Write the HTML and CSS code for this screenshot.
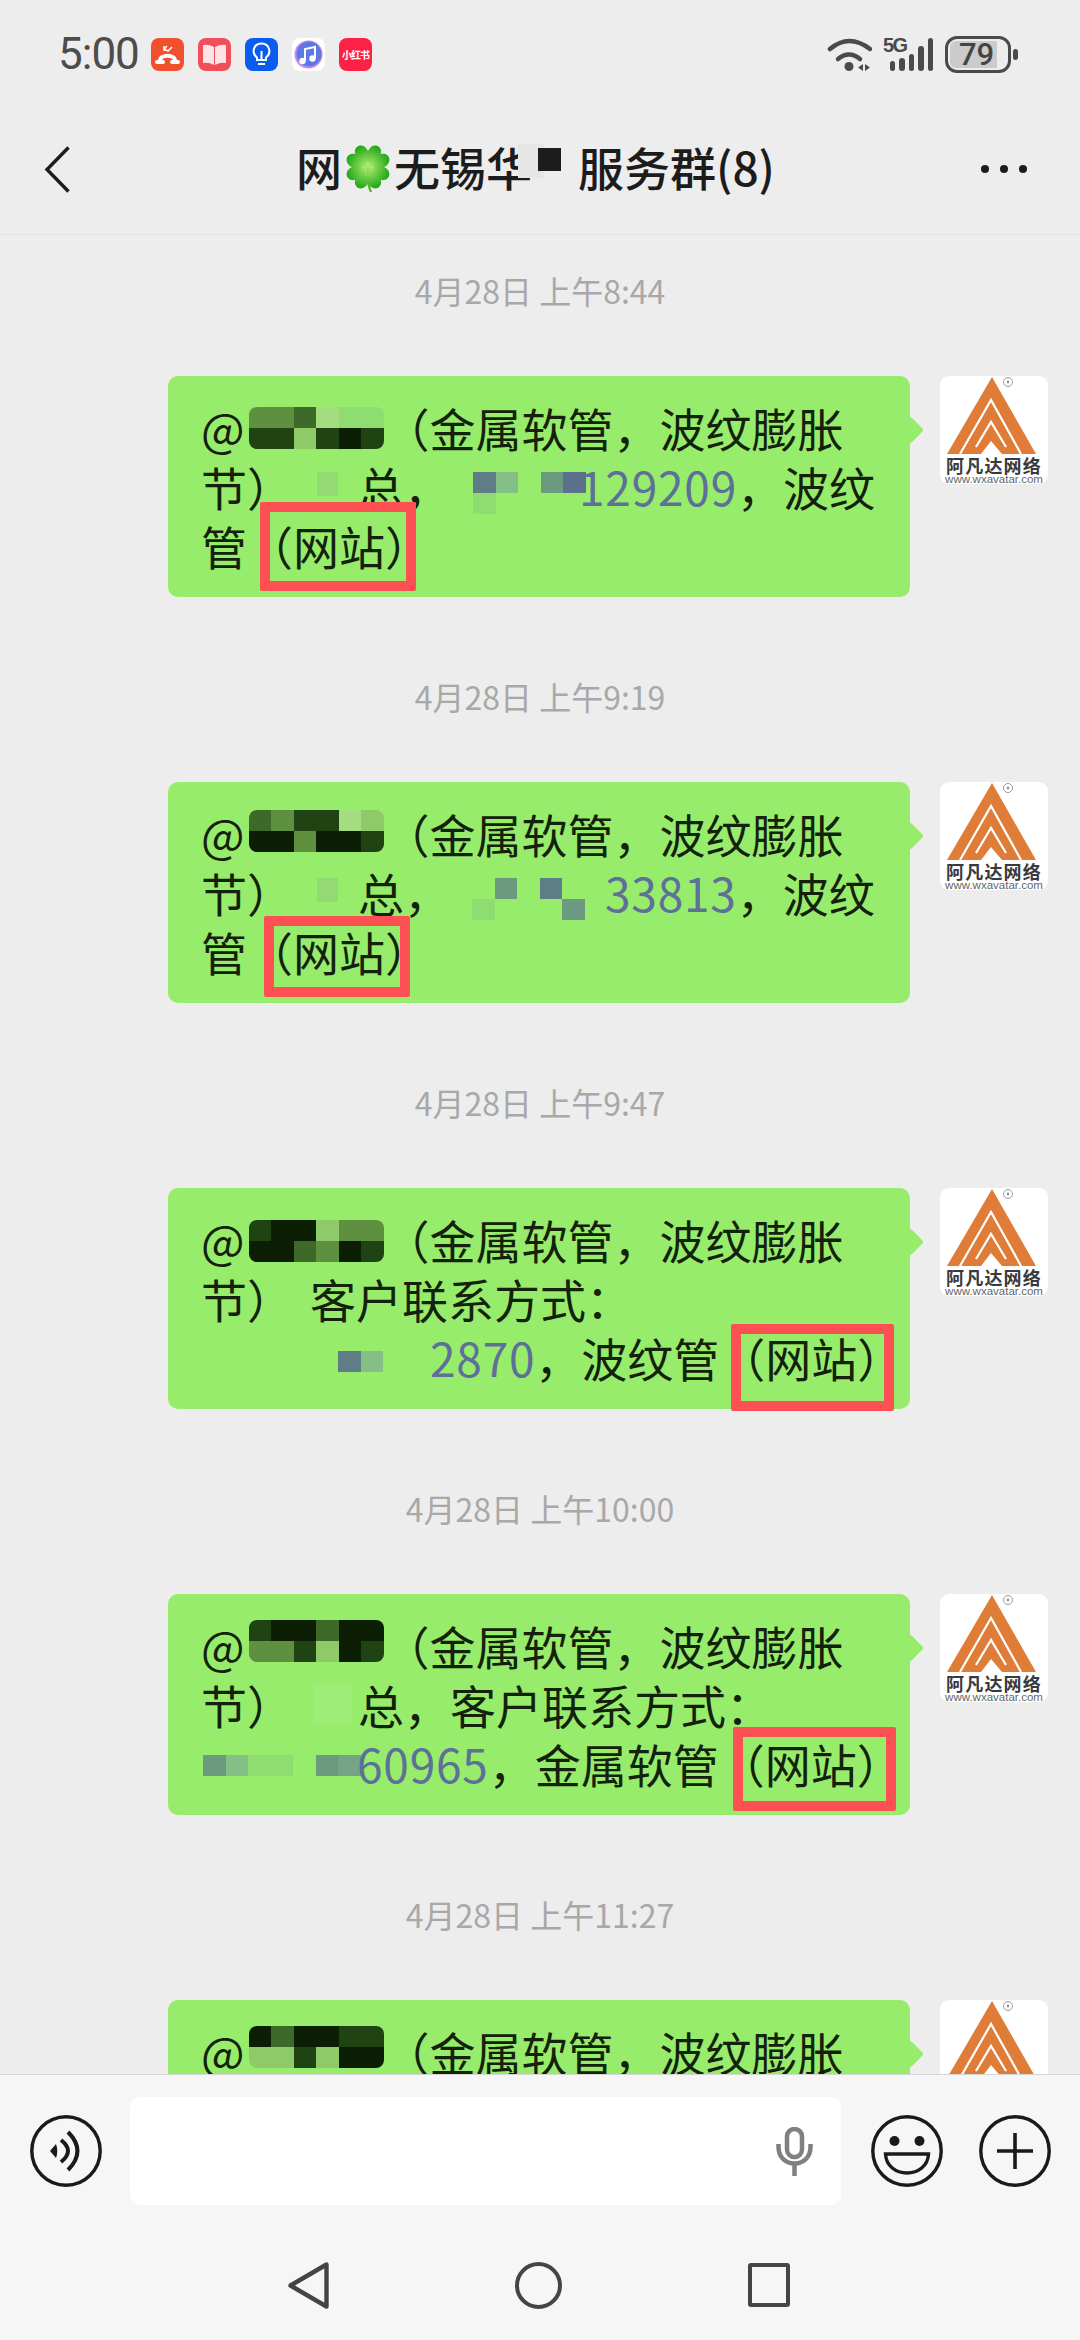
FILE: index.html
```html
<!DOCTYPE html>
<html lang="zh-CN">
<head>
    <meta charset="UTF-8">
    <meta name="viewport" content="width=device-width, initial-scale=1.0">
    <title>网无锡服务群(8)</title>
    <link rel="stylesheet" href="styles.css">
</head>
<body>
    <svg class="defs" width="0" height="0">
        <defs>
            <symbol id="logo" viewBox="0 0 108 80">
                <path d="M52 1 L96 78 H7 Z" fill="#df7d38"/>
                <path d="M20 78 L51 24 L81 78" fill="none" stroke="#fff" stroke-width="2.2"/>
                <path d="M36 71 L51 46 L66 71" fill="none" stroke="#fff" stroke-width="2.2"/>
                <path d="M41 78 L51 65 L62 78 Z" fill="#fff"/>
                <circle cx="68" cy="6" r="4.5" fill="none" stroke="#999" stroke-width="1"/>
                <circle cx="68" cy="6" r="1.4" fill="#999"/>
            </symbol>
        </defs>
    </svg>

    <div class="page">
        <div class="status">
            <span class="time">5:00</span>
            <div class="notify">
                <svg class="app" viewBox="0 0 33 33">
                    <rect width="33" height="33" rx="8" fill="#f0502b"/>
                    <path d="M9 24 V23 C9 16 24 16 24 23 V24" fill="none" stroke="#fff" stroke-width="4"/>
                    <path d="M6 24 H12 M21 24 H27" stroke="#fff" stroke-width="4" stroke-linecap="round"/>
                    <path d="M13 8 V13 M13 11 L16 8 M13 11 L17 13 L21 9" fill="none" stroke="#fff" stroke-width="1.5"/>
                </svg>
                <svg class="app" viewBox="0 0 33 33">
                    <rect width="33" height="33" rx="8" fill="#ef4f59"/>
                    <path d="M5 7 Q11 6 16 9 V27 Q11 24 5 25 Z" fill="#fde3e6"/>
                    <path d="M28 7 Q22 6 17 9 V27 Q22 24 28 25 Z" fill="#fde3e6"/>
                </svg>
                <svg class="app" viewBox="0 0 33 33">
                    <rect width="33" height="33" rx="8" fill="#0a5cf0"/>
                    <path d="M12 22 V19.5 C6 15 8.5 5.5 16.5 5.5 C24.5 5.5 27 15 21 19.5 V22 Z" fill="none" stroke="#fff" stroke-width="2"/>
                    <path d="M13 26 H20 M16.5 22 V13" stroke="#fff" stroke-width="2" fill="none"/>
                </svg>
                <svg class="app" viewBox="0 0 33 33">
                    <rect width="33" height="33" rx="8" fill="#fff"/>
                    <circle cx="16.5" cy="16.5" r="14" fill="#c58bea"/>
                    <circle cx="17" cy="16" r="12.5" fill="#5b78e6"/>
                    <path d="M13 23 V11 L23 9 V20" fill="none" stroke="#fff" stroke-width="2"/>
                    <circle cx="10.5" cy="23" r="3.2" fill="#fff"/>
                    <circle cx="20.5" cy="20.5" r="3.2" fill="#fff"/>
                </svg>
                <div class="app app-red">小红书</div>
            </div>
            <div class="sys">
                <svg class="wifi" viewBox="0 0 45 33">
                    <path d="M3 11 Q22 -5 43 11" fill="none" stroke="#4a4a4a" stroke-width="4.5" stroke-linecap="round"/>
                    <path d="M11 21 Q22 12 33 21" fill="none" stroke="#4a4a4a" stroke-width="4.5" stroke-linecap="round"/>
                    <circle cx="22" cy="28.5" r="4.5" fill="#4a4a4a"/>
                    <path d="M36 26 V33 L31 29.5 Z M38 26 V33 L43 29.5 Z" fill="#4a4a4a"/>
                </svg>
                <div class="signal">
                    <span class="five-g">5G</span>
                    <div class="bars">
                        <i class="bar bar-1"></i>
                        <i class="bar bar-2"></i>
                        <i class="bar bar-3"></i>
                        <i class="bar bar-4"></i>
                        <i class="bar bar-5"></i>
                    </div>
                </div>
                <div class="battery">
                    <div class="battery-body">
                        <div class="battery-fill">79</div>
                    </div>
                    <i class="battery-nub"></i>
                </div>
            </div>
        </div>

        <div class="header">
            <svg class="back" viewBox="0 0 27 47">
                <path d="M24.5 1.5 L3 23.5 L24.5 45.5" fill="none" stroke="#1c1c1c" stroke-width="3.4"/>
            </svg>
            <div class="title">网<svg class="clover" viewBox="0 0 52 47">
                    <defs>
                        <radialGradient id="leaf" cx="50%" cy="90%" r="90%">
                            <stop offset="0" stop-color="#a6e86a"/>
                            <stop offset="1" stop-color="#22a818"/>
                        </radialGradient>
                    </defs>
                    <path d="M26 22 C25 32 26 40 29 47" fill="none" stroke="#55b52e" stroke-width="2.4"/>
                    <g transform="translate(26 22)">
                        <path transform="rotate(45)" d="M0 0 C-4 -6 -13 -8 -12 -16 C-11 -23 -3 -24 0 -18 C3 -24 11 -23 12 -16 C13 -8 4 -6 0 0 Z" fill="url(#leaf)"/>
                        <path transform="rotate(135)" d="M0 0 C-4 -6 -13 -8 -12 -16 C-11 -23 -3 -24 0 -18 C3 -24 11 -23 12 -16 C13 -8 4 -6 0 0 Z" fill="url(#leaf)"/>
                        <path transform="rotate(225)" d="M0 0 C-4 -6 -13 -8 -12 -16 C-11 -23 -3 -24 0 -18 C3 -24 11 -23 12 -16 C13 -8 4 -6 0 0 Z" fill="url(#leaf)"/>
                        <path transform="rotate(315)" d="M0 0 C-4 -6 -13 -8 -12 -16 C-11 -23 -3 -24 0 -18 C3 -24 11 -23 12 -16 C13 -8 4 -6 0 0 Z" fill="url(#leaf)"/>
                    </g>
                </svg>无锡华<span class="title-mask"><i></i></span>服务群(8)</div>
            <div class="more"><i></i><i></i><i></i></div>
        </div>

        <div class="chat">
            <div class="msg">
                <div class="stamp">4月28日 上午8:44</div>
                <div class="row">
                    <div class="bubble">
                        <div class="line">@<span class="cells name mt9">
                            <i class="c-g3"></i><i class="c-g3"></i><i class="c-g2"></i><i class="c-l2"></i><i class="c-l1"></i><i class="c-l1"></i>
                            <i class="c-g1"></i><i class="c-g1"></i><i class="c-g4"></i><i class="c-g1"></i><i class="c-k"></i><i class="c-g1"></i>
                        </span>（金属软管，波纹膨胀</div>
                        <div class="line">节）<span class="smear"><i></i></span>总，<span class="cells phone phone-a mt15">
                            <i class="c-b1"></i><i class="c-b2"></i><i></i><i class="c-b3"></i><i class="c-b4"></i>
                            <i class="c-l1"></i><i></i><i></i><i></i><i></i>
                        </span><span class="num">129209</span>，波纹</div>
                        <div class="line">管<span class="mark mark-1">（网站）</span></div>
                    </div>
                    <div class="avatar">
                        <svg class="avatar-logo"><use href="#logo"/></svg>
                        <span class="avatar-name">阿凡达网络</span>
                        <span class="avatar-url">www.wxavatar.com</span>
                    </div>
                </div>
            </div>

            <div class="msg">
                <div class="stamp">4月28日 上午9:19</div>
                <div class="row">
                    <div class="bubble">
                        <div class="line">@<span class="cells name mt6">
                            <i class="c-g2"></i><i class="c-g3"></i><i class="c-g1"></i><i class="c-g1"></i><i class="c-l2"></i><i class="c-g4"></i>
                            <i class="c-k"></i><i class="c-k"></i><i class="c-g3"></i><i class="c-k"></i><i class="c-k"></i><i class="c-g1"></i>
                        </span>（金属软管，波纹膨胀</div>
                        <div class="line">节）<span class="smear"><i></i></span>总，<span class="cells phone phone-b mt15">
                            <i></i><i class="c-b3"></i><i></i><i class="c-b1"></i><i></i>
                            <i class="c-l1"></i><i></i><i></i><i></i><i class="c-b3"></i>
                        </span><span class="num">33813</span>，波纹</div>
                        <div class="line">管<span class="mark mark-2">（网站）</span></div>
                    </div>
                    <div class="avatar">
                        <svg class="avatar-logo"><use href="#logo"/></svg>
                        <span class="avatar-name">阿凡达网络</span>
                        <span class="avatar-url">www.wxavatar.com</span>
                    </div>
                </div>
            </div>

            <div class="msg">
                <div class="stamp">4月28日 上午9:47</div>
                <div class="row">
                    <div class="bubble">
                        <div class="line">@<span class="cells name mt10">
                            <i class="c-g1"></i><i class="c-k"></i><i class="c-k"></i><i class="c-g4"></i><i class="c-g3"></i><i class="c-g3"></i>
                            <i class="c-k"></i><i class="c-k"></i><i class="c-g2"></i><i class="c-g3"></i><i class="c-k"></i><i class="c-g1"></i>
                        </span>（金属软管，波纹膨胀</div>
                        <div class="line">节）<span class="word-gap"></span>客户联系方式：</div>
                        <div class="line"><span class="cells phone phone-c mt23">
                            <i></i><i></i><i></i><i></i><i></i><i></i><i class="c-b1"></i><i class="c-b2"></i>
                        </span><span class="num">2870</span>，波纹管<span class="mark mark-3">（网站）</span></div>
                    </div>
                    <div class="avatar">
                        <svg class="avatar-logo"><use href="#logo"/></svg>
                        <span class="avatar-name">阿凡达网络</span>
                        <span class="avatar-url">www.wxavatar.com</span>
                    </div>
                </div>
            </div>

            <div class="msg">
                <div class="stamp">4月28日 上午10:00</div>
                <div class="row">
                    <div class="bubble">
                        <div class="line">@<span class="cells name mt4">
                            <i class="c-g1"></i><i class="c-k"></i><i class="c-k"></i><i class="c-g2"></i><i class="c-k"></i><i class="c-k"></i>
                            <i class="c-g3"></i><i class="c-g3"></i><i class="c-g1"></i><i class="c-g4"></i><i class="c-k"></i><i class="c-g1"></i>
                        </span>（金属软管，波纹膨胀</div>
                        <div class="line">节）<span class="smear smear-pale"><i></i></span>总，客户联系方式：</div>
                        <div class="line"><span class="cells phone phone-d mt21">
                            <i class="c-b3"></i><i class="c-b2"></i><i class="c-l1"></i><i class="c-l1"></i><i></i><i class="c-b3"></i><i class="c-b5"></i>
                        </span><span class="num">60965</span>，金属软管<span class="mark mark-4">（网站）</span></div>
                    </div>
                    <div class="avatar">
                        <svg class="avatar-logo"><use href="#logo"/></svg>
                        <span class="avatar-name">阿凡达网络</span>
                        <span class="avatar-url">www.wxavatar.com</span>
                    </div>
                </div>
            </div>

            <div class="msg">
                <div class="stamp">4月28日 上午11:27</div>
                <div class="row">
                    <div class="bubble">
                        <div class="line">@<span class="cells name mt4">
                            <i class="c-k"></i><i class="c-g2"></i><i class="c-k"></i><i class="c-k"></i><i class="c-g1"></i><i class="c-g1"></i>
                            <i class="c-g4"></i><i class="c-g4"></i><i class="c-g1"></i><i class="c-g4"></i><i class="c-k"></i><i class="c-k"></i>
                        </span>（金属软管，波纹膨胀</div>
                    </div>
                    <div class="avatar">
                        <svg class="avatar-logo"><use href="#logo"/></svg>
                        <span class="avatar-name">阿凡达网络</span>
                        <span class="avatar-url">www.wxavatar.com</span>
                    </div>
                </div>
            </div>
        </div>

        <div class="composer">
            <svg class="round-btn" viewBox="0 0 72 72">
                <circle cx="36" cy="36" r="34.2" fill="none" stroke="#1a1a1a" stroke-width="3.4"/>
                <path d="M20 36 L26 29 Q28.5 36 26 43 Z" fill="#1a1a1a"/>
                <path d="M31 25 Q45 36 31 47" fill="none" stroke="#1a1a1a" stroke-width="4"/>
                <path d="M38 17 Q57 36 38 55" fill="none" stroke="#1a1a1a" stroke-width="4"/>
            </svg>
            <div class="input">
                <svg class="mic" viewBox="0 0 37 49">
                    <rect x="11" y="2" width="15" height="28" rx="7.5" fill="none" stroke="#808080" stroke-width="4.5"/>
                    <path d="M2.5 17 V20 C2.5 42 34.5 42 34.5 20 V17" fill="none" stroke="#808080" stroke-width="4.5"/>
                    <path d="M18.5 36 V49" stroke="#808080" stroke-width="4.5"/>
                </svg>
            </div>
            <svg class="round-btn smile-btn" viewBox="0 0 72 72">
                <circle cx="36" cy="36" r="34.2" fill="none" stroke="#1a1a1a" stroke-width="3.4"/>
                <circle cx="23.5" cy="26" r="5" fill="#1a1a1a"/>
                <circle cx="48.5" cy="26" r="5" fill="#1a1a1a"/>
                <path d="M14.5 39 H57.5 C57 51 47 58 36 58 C25 58 15 51 14.5 39 Z" fill="none" stroke="#1a1a1a" stroke-width="3.4"/>
            </svg>
            <svg class="round-btn plus-btn" viewBox="0 0 72 72">
                <circle cx="36" cy="36" r="34.2" fill="none" stroke="#1a1a1a" stroke-width="3.4"/>
                <path d="M18 36 H54 M36 18 V54" fill="none" stroke="#1a1a1a" stroke-width="3.6"/>
            </svg>
        </div>

        <div class="nav">
            <svg class="nav-back" viewBox="0 0 41 47">
                <path d="M38.5 2.5 V44.5 L2.5 23.5 Z" fill="none" stroke="#444" stroke-width="4.4" stroke-linejoin="round"/>
            </svg>
            <i class="nav-home"></i>
            <i class="nav-recent"></i>
        </div>
    </div>
</body>
</html>
```

FILE: styles.css
```css
* {
    box-sizing: border-box;
}
body {
    margin: 0;
    padding: 0;
    background-color: #ededed;
    font-family: "Noto Sans CJK SC", "Noto Sans", sans-serif;
    text-spacing-trim: space-all;
}
i {
    display: block;
}
.defs {
    display: block;
    height: 0;
}
.page {
    display: flex;
    flex-direction: column;
    width: 1080px;
    height: 2340px;
    overflow: hidden;
}

/* status bar */
.status {
    display: flex;
    align-items: center;
    flex: none;
    height: 72px;
    margin-top: 18px;
    padding: 0 62px 0 58px;
}
.time {
    width: 93px;
    font-family: Roboto, sans-serif;
    font-size: 44px;
    line-height: 72px;
    letter-spacing: -1px;
    color: #4c4c4c;
}
.notify {
    display: flex;
    gap: 14px;
}
.app {
    display: block;
    width: 33px;
    height: 33px;
}
.app-red {
    border-radius: 8px;
    background-color: #fb2245;
    color: #fff;
    font-size: 10px;
    font-weight: 700;
    line-height: 33px;
    letter-spacing: -1px;
    text-align: center;
    white-space: nowrap;
}
.sys {
    display: flex;
    align-items: center;
    margin-left: auto;
}
.wifi {
    display: block;
    width: 45px;
    height: 33px;
    margin-right: 11px;
}
.signal {
    position: relative;
    width: 50px;
    height: 33px;
}
.five-g {
    position: absolute;
    left: 0;
    top: -3px;
    font-family: "Liberation Sans", sans-serif;
    font-size: 20px;
    font-weight: 700;
    line-height: 20px;
    letter-spacing: -1.5px;
    color: #4a4a4a;
}
.bars {
    display: flex;
    align-items: flex-end;
    gap: 4px;
    height: 33px;
    padding-left: 7px;
}
.bar {
    width: 5.5px;
    border-radius: 3px;
    background-color: #4a4a4a;
}
.bar-1 { height: 10px; }
.bar-2 { height: 13px; }
.bar-3 { height: 17px; }
.bar-4 { height: 25px; }
.bar-5 { height: 33px; }
.battery {
    display: flex;
    align-items: center;
    margin-left: 12px;
}
.battery-body {
    width: 66px;
    height: 37px;
    padding: 2px;
    border: 3px solid #4a4a4a;
    border-radius: 12px;
}
.battery-fill {
    width: 47px;
    height: 100%;
    padding-left: 9px;
    border-radius: 6px 0 0 6px;
    background-color: #cbcbcb;
    color: #444;
    font-family: Roboto, sans-serif;
    font-size: 31px;
    font-weight: 500;
    line-height: 28px;
    white-space: nowrap;
}
.battery-nub {
    width: 5px;
    height: 11px;
    margin-left: 2px;
    border-radius: 3px;
    background-color: #4a4a4a;
}

/* title bar */
.header {
    display: flex;
    align-items: center;
    flex: none;
    height: 145px;
    padding: 14px 53px 0 44px;
    border-bottom: 1px solid #e2e2e2;
}
.back {
    display: block;
    width: 27px;
    height: 47px;
}
.title {
    flex: 1;
    padding: 0 0 6px 225px;
    color: #1c1c1c;
    font-size: 46px;
    font-weight: 500;
    line-height: 60px;
    white-space: nowrap;
}
.clover {
    display: inline-block;
    width: 52px;
    height: 47px;
    vertical-align: -6px;
}
.title-mask {
    position: relative;
    display: inline-block;
    width: 46px;
    height: 46px;
    vertical-align: -6px;
}
.title-mask::before {
    content: "";
    position: absolute;
    left: -14px;
    top: -2px;
    width: 26px;
    height: 34px;
    background-color: #e6e6e6;
}
.title-mask i {
    position: absolute;
    left: 6px;
    top: 2px;
    width: 23px;
    height: 23px;
    background-color: #1c1c1c;
}
.more {
    display: flex;
    gap: 11px;
}
.more i {
    width: 8px;
    height: 8px;
    border-radius: 50%;
    background-color: #1c1c1c;
}

/* messages */
.chat {
    flex: 1;
    min-height: 0;
    overflow: hidden;
    padding: 35px 32px 0 168px;
}
.msg {
    margin-bottom: 79px;
}
.stamp {
    margin: 0 -32px 66px -168px;
    color: #a8a8a8;
    font-size: 32px;
    line-height: 40px;
    text-align: center;
}
.row {
    display: flex;
    align-items: flex-start;
    gap: 30px;
}
.bubble {
    position: relative;
    flex: none;
    width: 742px;
    padding: 22px 33px;
    border-radius: 10px;
    background-color: #97ec6c;
    color: #14220c;
    font-size: 46px;
    line-height: 59px;
}
.bubble::after {
    content: "";
    position: absolute;
    right: -10px;
    top: 44px;
    width: 20px;
    height: 20px;
    border-radius: 3px;
    background-color: #97ec6c;
    transform: rotate(45deg);
}
.line {
    height: 59px;
    white-space: nowrap;
}
.num {
    color: #5d7097;
    letter-spacing: 0.8px;
}
.word-gap {
    display: inline-block;
    width: 17px;
}

/* redaction blocks */
.cells {
    display: inline-grid;
    grid-auto-rows: 21px;
    vertical-align: top;
}
.name {
    width: 135px;
    margin-left: 4px;
    overflow: hidden;
    border-radius: 8px;
    grid-template-columns: repeat(6, 22.5px);
}
.phone-a {
    width: 129px;
    padding-left: 23px;
    grid-template-columns: repeat(5, 22.5px);
}
.phone-b {
    width: 155px;
    padding-left: 22px;
    grid-template-columns: repeat(5, 22.5px);
}
.phone-c {
    width: 229px;
    padding-left: 2px;
    grid-template-columns: repeat(8, 22.5px);
}
.phone-d {
    width: 156px;
    padding-left: 2px;
    grid-template-columns: repeat(7, 22.5px);
}
.mt4 { margin-top: 4px; }
.mt6 { margin-top: 6px; }
.mt9 { margin-top: 9px; }
.mt10 { margin-top: 10px; }
.mt15 { margin-top: 15px; }
.mt21 { margin-top: 21px; }
.mt23 { margin-top: 23px; }
.c-k { background-color: #0c1e04; }
.c-g1 { background-color: #1f4313; }
.c-g2 { background-color: #3d6a28; }
.c-g3 { background-color: #5f9040; }
.c-g4 { background-color: #8fca68; }
.c-l1 { background-color: #8fdc70; }
.c-l2 { background-color: #a3dd80; }
.c-b1 { background-color: #5f7d86; }
.c-b2 { background-color: #84c085; }
.c-b3 { background-color: #6c9a80; }
.c-b4 { background-color: #5a7189; }
.c-b5 { background-color: #75a585; }
.smear {
    display: inline-block;
    width: 65px;
    height: 59px;
    vertical-align: top;
}
.smear i {
    width: 21px;
    height: 24px;
    margin: 15px 0 0 24px;
    background-color: #94da74;
}
.smear-pale i {
    width: 38px;
    height: 38px;
    margin: 10px 0 0 21px;
    background-color: #9eed78;
}

/* red boxes */
.mark {
    position: relative;
    display: inline-block;
    height: 59px;
    vertical-align: top;
}
.mark::after {
    content: "";
    position: absolute;
    border: 10px solid #fd5053;
    border-radius: 2px;
}
.mark-1::after {
    left: 13px;
    right: 15px;
    top: -14px;
    bottom: -16px;
}
.mark-2::after {
    left: 17px;
    right: 21px;
    top: -6px;
    bottom: -16px;
}
.mark-3::after {
    left: 12px;
    right: 9px;
    top: -4px;
    bottom: -24px;
}
.mark-4::after {
    left: 14px;
    right: 7px;
    top: -7px;
    bottom: -18px;
}

/* avatars */
.avatar {
    display: flex;
    flex-direction: column;
    flex: none;
    width: 108px;
    height: 108px;
    overflow: hidden;
    border-radius: 9px;
    background-color: #fff;
}
.avatar-logo {
    display: block;
    flex: none;
    width: 108px;
    height: 80px;
}
.avatar-name {
    height: 18px;
    color: #3a3a3a;
    font-size: 18px;
    font-weight: 700;
    line-height: 18px;
    letter-spacing: 1.2px;
    text-align: center;
    white-space: nowrap;
}
.avatar-url {
    color: #666;
    font-family: "Liberation Sans", sans-serif;
    font-size: 11.5px;
    line-height: 10px;
    text-align: center;
    white-space: nowrap;
}

/* input row */
.composer {
    display: flex;
    align-items: center;
    flex: none;
    padding: 22px 0 21px 30px;
    border-top: 1px solid #d6d6d6;
    background-color: #f6f6f6;
}
.round-btn {
    display: block;
    flex: none;
    width: 72px;
    height: 72px;
}
.input {
    display: flex;
    align-items: center;
    justify-content: flex-end;
    flex: none;
    width: 711px;
    height: 108px;
    margin-left: 28px;
    padding-right: 28px;
    border-radius: 10px;
    background-color: #fff;
}
.mic {
    display: block;
    width: 37px;
    height: 49px;
}
.smile-btn {
    margin-left: 30px;
}
.plus-btn {
    margin-left: 36px;
}

/* system nav */
.nav {
    display: flex;
    align-items: center;
    flex: none;
    height: 114px;
    gap: 186px;
    padding: 4px 0 0 288px;
    background-color: #f6f6f6;
}
.nav-back {
    display: block;
    width: 41px;
    height: 47px;
}
.nav-home {
    width: 47px;
    height: 47px;
    border: 4.4px solid #444;
    border-radius: 50%;
}
.nav-recent {
    width: 42px;
    height: 44px;
    border: 4.4px solid #444;
    border-radius: 3px;
}
```
